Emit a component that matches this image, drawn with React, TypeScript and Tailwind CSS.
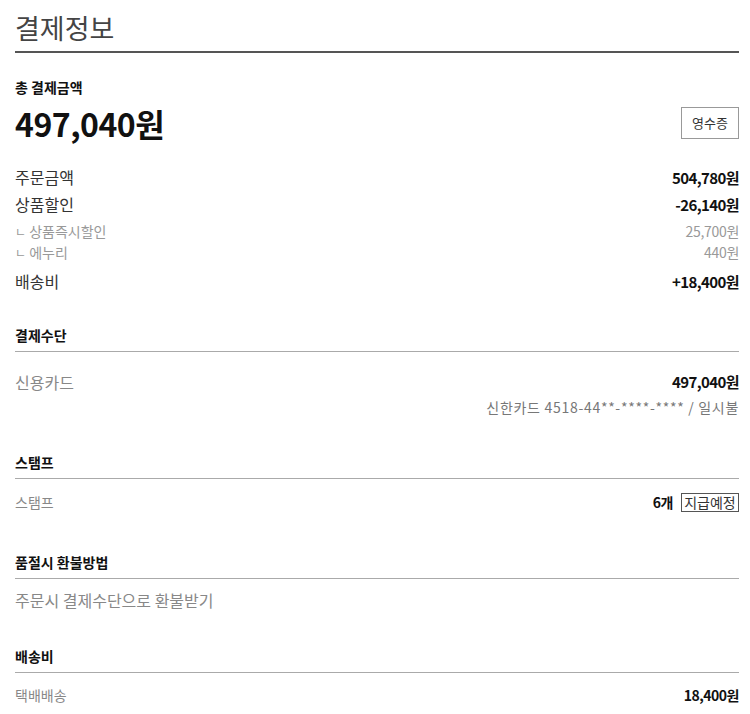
import React from "react";

function SubRow({ label, value }: { label: string; value: string }) {
  return (
    <div className="flex h-[21px] items-center justify-between text-[14px] leading-[21px] text-[#999]">
      <span>
        <span className="text-[12px]">ㄴ</span> {label}
      </span>
      <span className="tracking-[-0.3px]">{value}</span>
    </div>
  );
}

function MainRow({ label, value }: { label: string; value: string }) {
  return (
    <div className="flex h-[27px] items-center justify-between">
      <span className="text-[16px] leading-[27px] text-[#333]">{label}</span>
      <span className="text-[15px] font-bold leading-[27px] tracking-[-0.6px] text-[#111]">{value}</span>
    </div>
  );
}

function SectionHeader({ title, className = "" }: { title: string; className?: string }) {
  return (
    <div className={"flex h-[32px] items-center border-b border-[#aaa] text-[14px] font-bold text-[#111] " + className}>
      {title}
    </div>
  );
}

export default function App() {
  return (
    <div className="min-h-[714px] w-[750px] bg-white font-['Noto_Sans_CJK_KR','Noto_Sans',sans-serif]">
      <div className="ml-[15px] w-[724px]">
        <div className="flex h-[53px] items-center border-b-2 border-[#555] pt-[4px] text-[27px] leading-[30px] text-[#444]">
          결제정보
        </div>

        <div className="mt-[24px] flex h-[20px] items-center text-[14px] font-bold leading-[20px] text-[#111]">
          총 결제금액
        </div>
        <div className="mt-[6px] flex h-[40px] items-center justify-between">
          <span className="text-[32px] font-bold leading-[40px] tracking-[-0.5px] text-[#111]">497,040원</span>
          <button className="flex h-[32px] w-[58px] items-center justify-center border border-[#999] bg-white text-[13px] text-[#333]">
            영수증
          </button>
        </div>

        <div className="mt-[21px]">
          <MainRow label="주문금액" value="504,780원" />
          <MainRow label="상품할인" value="-26,140원" />
          <div className="mt-[3px]">
            <SubRow label="상품즉시할인" value="25,700원" />
            <SubRow label="에누리" value="440원" />
          </div>
          <div className="mt-[5px]">
            <MainRow label="배송비" value="+18,400원" />
          </div>
        </div>

        <SectionHeader title="결제수단" className="mt-[25px]" />
        <div className="mt-[18px] flex h-[24px] items-center justify-between">
          <span className="text-[16px] leading-[24px] text-[#888]">신용카드</span>
          <span className="text-[15px] font-bold leading-[24px] tracking-[-0.6px] text-[#111]">497,040원</span>
        </div>
        <div className="mt-[3px] flex h-[20px] items-center justify-end text-[14px] leading-[20px] tracking-[0.7px] text-[#777]">
          신한카드 4518-44**-****-**** / 일시불
        </div>

        <SectionHeader title="스탬프" className="mt-[30px]" />
        <div className="mt-[11px] flex h-[24px] items-center justify-between">
          <span className="text-[14px] leading-[24px] text-[#888]">스탬프</span>
          <span className="flex items-center gap-[8px]">
            <span className="text-[14px] font-bold tracking-[-0.5px] text-[#111]">6개</span>
            <span className="flex h-[19px] w-[58px] items-center justify-center border border-[#555] text-[14px] leading-[17px] text-[#333]">
              지급예정
            </span>
          </span>
        </div>

        <SectionHeader title="품절시 환불방법" className="mt-[33px]" />
        <div className="mt-[9px] flex h-[24px] items-center text-[16px] leading-[24px] text-[#888]">
          주문시 결제수단으로 환불받기
        </div>

        <SectionHeader title="배송비" className="mt-[29px] h-[30px]" />
        <div className="mt-[10px] flex h-[24px] items-center justify-between">
          <span className="text-[14px] leading-[24px] text-[#888]">택배배송</span>
          <span className="text-[14px] font-bold leading-[24px] tracking-[-0.5px] text-[#111]">18,400원</span>
        </div>
      </div>
    </div>
  );
}
